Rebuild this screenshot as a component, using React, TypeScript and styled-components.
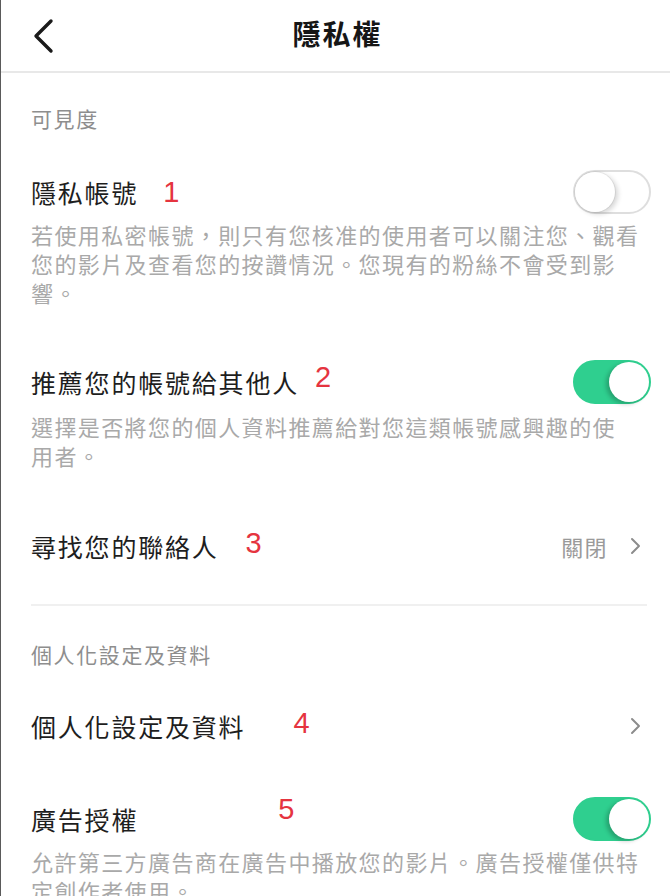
import * as React from 'react';
import styled, { createGlobalStyle } from 'styled-components';

const GlobalStyle = createGlobalStyle`
  html, body {
    margin: 0;
    padding: 0;
    background: #ffffff;
  }
  body {
    font-family: 'Noto Sans CJK TC', 'Noto Sans', sans-serif;
    -webkit-font-smoothing: antialiased;
  }
`;

const Page = styled.div`
  width: 670px;
  min-height: 896px;
  box-sizing: border-box;
  border-left: 1px solid #5a5a5a;
  background: #ffffff;
  overflow: hidden;
`;

const Header = styled.header`
  display: grid;
  grid-template-columns: 1fr auto 1fr;
  align-items: center;
  height: 71px;
  border-bottom: 2px solid #e8e8e8;
`;

const BackButton = styled.button`
  justify-self: start;
  display: flex;
  align-items: center;
  margin-left: 31px;
  padding: 0;
  border: 0;
  background: none;
  cursor: pointer;
`;

const Title = styled.h1`
  margin: 0 0 6px 4px;
  font-size: 28px;
  font-weight: 700;
  letter-spacing: 2px;
  color: #161616;
  line-height: 1;
`;

const Content = styled.main`
  display: flex;
  flex-direction: column;
  padding: 0 19px 0 30px;
`;

const SectionLabel = styled.div<{ $gap: number }>`
  margin-top: ${(p) => p.$gap}px;
  font-size: 21px;
  line-height: 30px;
  letter-spacing: 1.6px;
  color: #8e8e8e;
`;

const Setting = styled.section<{ $gap: number }>`
  display: flex;
  flex-direction: column;
  margin-top: ${(p) => p.$gap}px;
`;

const Row = styled.div`
  display: flex;
  align-items: center;
  justify-content: space-between;
  min-height: 44px;
`;

const RowTitle = styled.div`
  display: flex;
  align-items: center;
  font-size: 25px;
  letter-spacing: 1.8px;
  color: #1e1e1e;
  line-height: 32px;
`;

const Marker = styled.span<{ $gap: number; $lift: number }>`
  margin-left: ${(p) => p.$gap}px;
  position: relative;
  top: -${(p) => p.$lift}px;
  font-family: 'Liberation Sans', Arial, sans-serif;
  font-size: 29px;
  line-height: 1;
  letter-spacing: 0;
  color: #e5343f;
`;

const Description = styled.p<{ $gap: number }>`
  margin: ${(p) => p.$gap}px 0 0;
  font-size: 22px;
  line-height: 29px;
  letter-spacing: 1.4px;
  color: #a9a9a9;
`;

const Keep = styled.span`
  white-space: nowrap;
`;

const Trailing = styled.div`
  display: flex;
  align-items: center;
  gap: 22px;
  margin-right: 10px;
`;

const TrailingValue = styled.span`
  font-size: 22px;
  letter-spacing: 1.4px;
  color: #9a9a9a;
`;

const Divider = styled.hr`
  margin: 36px 4px 0 0;
  border: 0;
  height: 2px;
  background: #f0f0f0;
`;

const Track = styled.button<{ $on: boolean }>`
  position: relative;
  flex-shrink: 0;
  width: 78px;
  height: 44px;
  padding: 0;
  border-radius: 22px;
  box-sizing: border-box;
  border: 2px solid ${(p) => (p.$on ? '#2fcf8f' : '#dedede')};
  background: ${(p) => (p.$on ? '#2fcf8f' : '#ffffff')};
  cursor: pointer;
`;

const Knob = styled.span<{ $on: boolean }>`
  position: absolute;
  top: 0;
  left: ${(p) => (p.$on ? '34px' : '0')};
  width: 40px;
  height: 40px;
  border-radius: 50%;
  background: #ffffff;
  box-shadow: ${(p) =>
    p.$on
      ? '-3px 2px 4px rgba(0, 0, 0, 0.22)'
      : '3px 2px 5px rgba(0, 0, 0, 0.16), 0 0 0 1px rgba(0, 0, 0, 0.06)'};
`;

const Toggle: React.FC<{ on: boolean }> = ({ on }) => (
  <Track $on={on} aria-pressed={on}>
    <Knob $on={on} />
  </Track>
);

const Chevron: React.FC = () => (
  <svg width="11" height="18" viewBox="0 0 11 18" fill="none">
    <polyline
      points="2,2 9,9 2,16"
      stroke="#8c8c8c"
      strokeWidth="2"
      strokeLinecap="round"
      strokeLinejoin="round"
    />
  </svg>
);

interface ItemProps {
  title: string;
  marker: string;
  markerGap: number;
  markerLift?: number;
  gap: number;
  descGap?: number;
  trailing: React.ReactNode;
  children?: React.ReactNode;
}

const Item: React.FC<ItemProps> = ({
  title,
  marker,
  markerGap,
  markerLift = 0,
  gap,
  descGap = 6,
  trailing,
  children,
}) => (
  <Setting $gap={gap}>
    <Row>
      <RowTitle>
        {title}
        <Marker $gap={markerGap} $lift={markerLift}>
          {marker}
        </Marker>
      </RowTitle>
      {trailing}
    </Row>
    {children && <Description $gap={descGap}>{children}</Description>}
  </Setting>
);

export default function App() {
  return (
    <Page>
      <GlobalStyle />
      <Header>
        <BackButton aria-label="返回">
          <svg width="22" height="36" viewBox="0 0 22 36" fill="none">
            <polyline
              points="19,3 4,18 19,33"
              stroke="#1a1a1a"
              strokeWidth="3.4"
              strokeLinecap="round"
              strokeLinejoin="round"
            />
          </svg>
        </BackButton>
        <Title>隱私權</Title>
        <span />
      </Header>
      <Content>
        <SectionLabel $gap={30}>可見度</SectionLabel>
        <Item
          title="隱私帳號"
          marker="1"
          markerGap={25}
          gap={37}
          trailing={<Toggle on={false} />}
        >
          若使用私密帳號，則只有您核准的使用者可以關注您、觀看您的影片及查看您的按讚情況。您現有的粉絲不會受到影響。
        </Item>
        <Item
          title="推薦您的帳號給其他人"
          marker="2"
          markerGap={16}
          markerLift={5}
          gap={53}
          descGap={8}
          trailing={<Toggle on />}
        >
          選擇是否將您的個人資料推薦給對您這類帳號感興趣的使<Keep>用者。</Keep>
        </Item>
        <Item
          title="尋找您的聯絡人"
          marker="3"
          markerGap={27}
          markerLift={3}
          gap={54}
          trailing={
            <Trailing>
              <TrailingValue>關閉</TrailingValue>
              <Chevron />
            </Trailing>
          }
        />
        <Divider />
        <SectionLabel $gap={33}>個人化設定及資料</SectionLabel>
        <Item
          title="個人化設定及資料"
          marker="4"
          markerGap={48}
          markerLift={3}
          gap={35}
          trailing={
            <Trailing>
              <Chevron />
            </Trailing>
          }
        />
        <Item
          title="廣告授權"
          marker="5"
          markerGap={140}
          markerLift={10}
          gap={49}
          trailing={<Toggle on />}
        >
          允許第三方廣告商在廣告中播放您的影片。廣告授權僅供特定創作者使用。
        </Item>
      </Content>
    </Page>
  );
}
